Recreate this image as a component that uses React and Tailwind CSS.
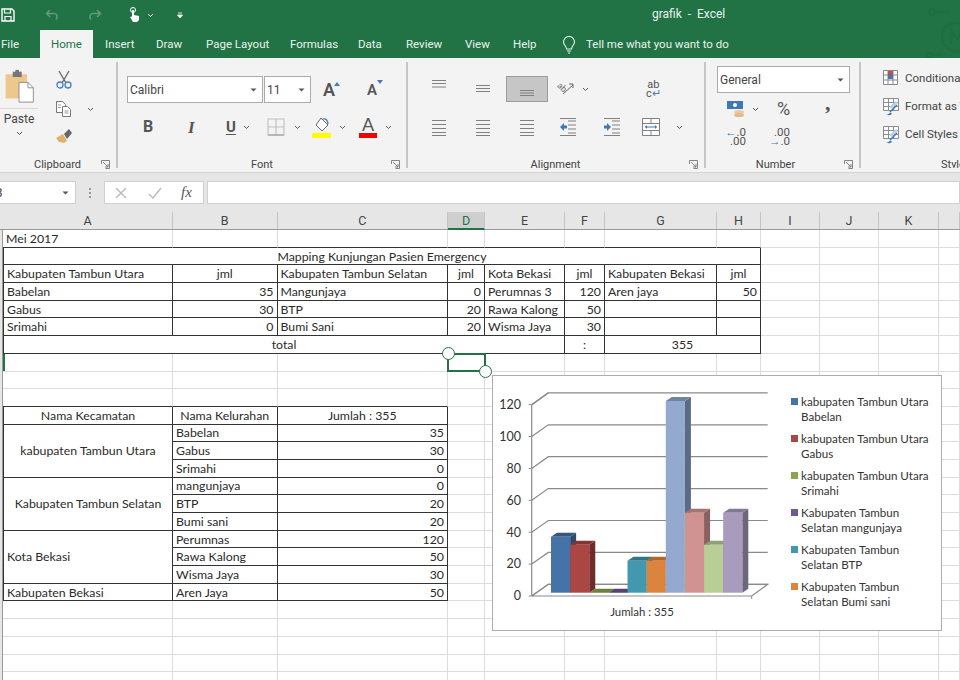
import { Fragment } from "react";

const tabs = [
  { label: "Insert", cls: "ml-[12px] w-[39px]" },
  { label: "Draw", cls: "ml-[12px] w-[38px]" },
  { label: "Page Layout", cls: "ml-[12px] w-[72px]" },
  { label: "Formulas", cls: "ml-[12px] w-[56px]" },
  { label: "Data", cls: "ml-[12px] w-[36px]" },
  { label: "Review", cls: "ml-[12px] w-[47px]" },
  { label: "View", cls: "ml-[12px] w-[36px]" },
  { label: "Help", cls: "ml-[12px] w-[32px]" },
];

const headers = [
  ["A", "w-[170px]"], ["B", "w-[104.5px]"], ["C", "w-[170.5px]"], ["D", "w-[37px]"],
  ["E", "w-[80px]"], ["F", "w-[40px]"], ["G", "w-[112px]"], ["H", "w-[44px]"],
  ["I", "w-[59px]"], ["J", "w-[59px]"], ["K", "w-[60px]"], ["", "w-[21px]"],
];

// t text, s span, a align, r black right, b black bottom, l black left, rs row span
const sheet = [
  [{ t: "Mei 2017", b: 1 }, { b: 1 }, { b: 1 }, { b: 1 }, { b: 1 }, { b: 1 }, { b: 1 }, { b: 1 }],
  [{ t: "Mapping Kunjungan Pasien Emergency", s: 8, a: "c", l: 1, r: 1, b: 1 }],
  [
    { t: "Kabupaten Tambun Utara", l: 1, r: 1, b: 1 }, { t: "jml", a: "c", r: 1, b: 1 },
    { t: "Kabupaten Tambun Selatan", r: 1, b: 1 }, { t: "jml", a: "c", r: 1, b: 1 },
    { t: "Kota Bekasi", r: 1, b: 1 }, { t: "jml", a: "c", r: 1, b: 1 },
    { t: "Kabupaten Bekasi", r: 1, b: 1 }, { t: "jml", a: "c", r: 1, b: 1 },
  ],
  [
    { t: "Babelan", l: 1, r: 1, b: 1 }, { t: "35", a: "r", r: 1, b: 1 },
    { t: "Mangunjaya", r: 1, b: 1 }, { t: "0", a: "r", r: 1, b: 1 },
    { t: "Perumnas 3", r: 1, b: 1 }, { t: "120", a: "r", r: 1, b: 1 },
    { t: "Aren jaya", r: 1, b: 1 }, { t: "50", a: "r", r: 1, b: 1 },
  ],
  [
    { t: "Gabus", l: 1, r: 1, b: 1 }, { t: "30", a: "r", r: 1, b: 1 },
    { t: "BTP", r: 1, b: 1 }, { t: "20", a: "r", r: 1, b: 1 },
    { t: "Rawa Kalong", r: 1, b: 1 }, { t: "50", a: "r", r: 1, b: 1 },
    { r: 1, b: 1 }, { r: 1, b: 1 },
  ],
  [
    { t: "Srimahi", l: 1, r: 1, b: 1 }, { t: "0", a: "r", r: 1, b: 1 },
    { t: "Bumi Sani", r: 1, b: 1 }, { t: "20", a: "r", r: 1, b: 1 },
    { t: "Wisma Jaya", r: 1, b: 1 }, { t: "30", a: "r", r: 1, b: 1 },
    { r: 1, b: 1 }, { r: 1, b: 1 },
  ],
  [
    { t: "total", s: 5, a: "c", l: 1, r: 1, b: 1 }, { t: ":", a: "c", r: 1, b: 1 },
    { t: "355", s: 2, a: "c", r: 1, b: 1 },
  ],
  [],
  [],
  [{ b: 1 }, { b: 1 }, { b: 1 }],
  [
    { t: "Nama Kecamatan", a: "c", l: 1, r: 1, b: 1 }, { t: "Nama Kelurahan", a: "c", r: 1, b: 1 },
    { t: "Jumlah : 355", a: "c", r: 1, b: 1 },
  ],
  [
    { t: "kabupaten Tambun Utara", a: "c", l: 1, r: 1, b: 1, rs: 1 },
    { t: "Babelan", r: 1, b: 1 }, { t: "35", a: "r", r: 1, b: 1 },
  ],
  [{ t: "Gabus", r: 1, b: 1 }, { t: "30", a: "r", r: 1, b: 1 }],
  [{ t: "Srimahi", r: 1, b: 1 }, { t: "0", a: "r", r: 1, b: 1 }],
  [
    { t: "Kabupaten Tambun Selatan", a: "c", l: 1, r: 1, b: 1, rs: 1 },
    { t: "mangunjaya", r: 1, b: 1 }, { t: "0", a: "r", r: 1, b: 1 },
  ],
  [{ t: "BTP", r: 1, b: 1 }, { t: "20", a: "r", r: 1, b: 1 }],
  [{ t: "Bumi sani", r: 1, b: 1 }, { t: "20", a: "r", r: 1, b: 1 }],
  [
    { t: "Kota Bekasi", l: 1, r: 1, b: 1, rs: 1 },
    { t: "Perumnas", r: 1, b: 1 }, { t: "120", a: "r", r: 1, b: 1 },
  ],
  [{ t: "Rawa Kalong", r: 1, b: 1 }, { t: "50", a: "r", r: 1, b: 1 }],
  [{ t: "Wisma Jaya", r: 1, b: 1 }, { t: "30", a: "r", r: 1, b: 1 }],
  [
    { t: "Kabupaten Bekasi", l: 1, r: 1, b: 1 }, { t: "Aren Jaya", r: 1, b: 1 },
    { t: "50", a: "r", r: 1, b: 1 },
  ],
];

const spanClass = { 1: "col-span-1", 2: "col-span-2", 5: "col-span-5", 8: "col-span-8" };
const alignClass = {
  l: "justify-start",
  c: "justify-center",
  r: "justify-end pr-[2px]",
};

const bars = [
  { v: 35, f: "#4572a7", t: "#34567f", s: "#2d4a6e" },
  { v: 30, f: "#aa4643", t: "#843533", s: "#6f2b29" },
  { v: 0, f: "#89a54e", t: "#6a803c", s: "#5a6d33" },
  { v: 0, f: "#71588f", t: "#56436e", s: "#4a3a5e" },
  { v: 20, f: "#4198af", t: "#317587", s: "#2a6373" },
  { v: 20, f: "#db843d", t: "#b0682d", s: "#965926" },
  { v: 120, f: "#93a9cf", t: "#72849f", s: "#5c6b85" },
  { v: 50, f: "#d19392", t: "#a47372", s: "#8a6060" },
  { v: 30, f: "#b9cd96", t: "#909f74", s: "#7a8862" },
  { v: 50, f: "#a99bbd", t: "#847993", s: "#6f667c" },
];

const legend = [
  { c: "bg-[#4572a7]", a: "kabupaten Tambun Utara", b: "Babelan" },
  { c: "bg-[#aa4643]", a: "kabupaten Tambun Utara", b: "Gabus" },
  { c: "bg-[#89a54e]", a: "kabupaten Tambun Utara", b: "Srimahi" },
  { c: "bg-[#71588f]", a: "Kabupaten Tambun", b: "Selatan mangunjaya" },
  { c: "bg-[#4198af]", a: "Kabupaten Tambun", b: "Selatan BTP" },
  { c: "bg-[#db843d]", a: "Kabupaten Tambun", b: "Selatan Bumi sani" },
];

const Chev = ({ className = "", color = "#555" }) => (
  <svg width="7" height="5" viewBox="0 0 7 5" className={className}>
    <path d="M1 1l2.5 2.5L6 1" fill="none" stroke={color} strokeWidth="1" />
  </svg>
);

const Caret = ({ className = "" }) => (
  <svg width="7" height="4" viewBox="0 0 7 4" className={className}>
    <path d="M0.5 0.5h6L3.5 3.5z" fill="#555" />
  </svg>
);

const Launcher = ({ className = "" }) => (
  <svg width="9" height="9" viewBox="0 0 9 9" className={className}>
    <path d="M0.5 4V0.5H8.5V8.5H4.5M2 2l5 5M7 4v3H4" fill="none" stroke="#777" strokeWidth="0.9" />
  </svg>
);

const Lines = ({ rows }) => (
  <svg width="18" height="18" viewBox="0 0 18 18">
    {rows.map((y) => (
      <path key={y} d={`M2 ${y}H16`} stroke="#808080" strokeWidth="1" />
    ))}
  </svg>
);

const TableBrush = () => (
  <svg width="17" height="18" viewBox="0 0 17 18" className="shrink-0">
    <path d="M.5.5h15v12H.5zM.5 4.500h15M5.500 .5v12M10.500 .5v12M.5 8.500h15" fill="#fff" stroke="#8c8c8c" />
    <path d="M6 9l7-6 2 2-6 6z" fill="#b9d2ea" />
    <path d="M3 16.500c2 0 3-.5 4-2l2 1c-1 2-3 2-6 1z" fill="#3f78b5" />
    <path d="M7 14l7-7" stroke="#3f78b5" strokeWidth="1.500" />
  </svg>
);

const GroupLabel = ({ children, launcher, className = "" }) => (
  <div className={`relative h-[10px] -mb-[2px] flex items-center justify-center text-[11px] text-[#444] ${className}`}>
    {children}
    {launcher && <Launcher className="absolute right-[6px] top-0" />}
  </div>
);

const Ribbon = () => (
  <div className="h-[114px] bg-[#f3f3f3] pb-[4px]">
    <div className="h-[110px] flex pt-[4px]">
      {/* clipboard */}
      <div className="w-[118px] border-r-2 border-[#c6c6c6] flex flex-col">
        <div className="flex-1 flex">
          <div className="w-[38px] flex flex-col items-center">
            <svg width="34" height="34" viewBox="0 0 38 38" className="mt-[7px] mb-[5px]">
              <rect x="4" y="6" width="24" height="27" rx="1" fill="#edc88d" />
              <rect x="12" y="3" width="10" height="6" fill="#777" />
              <rect x="15" y="1" width="4" height="3" fill="#777" />
              <path d="M19 15h10l6 6v16H19z" fill="#fff" stroke="#888" strokeWidth="1" />
              <path d="M29 15v6h6" fill="none" stroke="#888" strokeWidth="1" />
            </svg>
            <div className="h-px w-full bg-[#d8d8d8] mb-[3px]" />
            <span className="text-[12px] leading-[14px] text-[#444]">Paste</span>
            <Chev className="mt-[5px]" />
          </div>
          <div className="w-[36px] ml-[8px] flex flex-col items-center pt-[8px] gap-[10px]">
            <svg width="18" height="20" viewBox="0 0 18 20">
              <path d="M4 1l7 12M14 1L7 13" stroke="#666" strokeWidth="1.3" fill="none" />
              <circle cx="5" cy="15" r="3" fill="none" stroke="#4e7eb5" strokeWidth="1.3" />
              <circle cx="13" cy="15" r="3" fill="none" stroke="#4e7eb5" strokeWidth="1.3" />
            </svg>
            <svg width="18" height="18" viewBox="0 0 18 18">
              <path d="M1.5 1.5h6l3 3v8h-9z" fill="#fff" stroke="#777" />
              <path d="M7.5 6.5h5l3 3v7h-8z" fill="#fff" stroke="#777" />
              <path d="M9.5 11h4M9.5 13h4M3 5h3M3 7.5h3" stroke="#999" />
            </svg>
            <svg width="18" height="18" viewBox="0 0 18 18">
              <path d="M1 10l7-4 4 7-3 2-5-1z" fill="#e0b26c" />
              <path d="M9 6l5-5 3 4-5 6z" fill="#666" />
            </svg>
          </div>
          <Chev className="mt-[45px] ml-[5px]" />
        </div>
        <GroupLabel launcher className="-ml-[1px]">Clipboard</GroupLabel>
      </div>

      {/* font */}
      <div className="w-[290px] border-r-2 border-[#c6c6c6] flex flex-col">
        <div className="flex-1">
          <div className="flex items-center mt-[14px] ml-[9px] h-[27px]">
            <div className="w-[136px] h-[27px] bg-white border border-[#ababab] flex items-center justify-between pl-[2px] pr-[5px] text-[12px] text-[#444]">
              Calibri
              <Caret />
            </div>
            <div className="ml-[1px] w-[47px] h-[27px] bg-white border border-[#ababab] flex items-center justify-between pl-[2px] pr-[5px] text-[12px] text-[#444]">
              11
              <Caret />
            </div>
            <span className="ml-[12px] relative text-[18px] leading-none text-[#555] font-semibold">
              A
              <svg width="6" height="4" viewBox="0 0 6 4" className="absolute -right-[5px] top-[1px]"><path d="M3 0l3 4H0z" fill="#4a7ab0" /></svg>
            </span>
            <span className="ml-[32px] relative text-[15px] leading-none text-[#555] font-semibold mt-[2px]">
              A
              <svg width="6" height="4" viewBox="0 0 6 4" className="absolute -right-[6px] top-[-3px]"><path d="M0 0h6L3 4z" fill="#4a7ab0" /></svg>
            </span>
          </div>
          <div className="flex items-center mt-[12px] h-[24px] text-[#555]">
            <span className="ml-[25px] w-[12px] text-[16px] font-bold leading-none">B</span>
            <span className="ml-[33px] w-[12px] text-[17px] font-bold italic leading-none font-['Liberation_Serif',serif]">I</span>
            <span className="ml-[26px] text-[15px] font-bold leading-none underline underline-offset-2">U</span>
            <Chev className="ml-[7px]" />
            <svg width="18" height="18" viewBox="0 0 18 18" className="ml-[17px]">
              <path d="M1 1h16v16H1zM9 1v16M1 9h16" fill="none" stroke="#c2c2c2" strokeWidth="1.2" />
              <path d="M1 17h16" stroke="#aaa" strokeWidth="1.5" />
            </svg>
            <Chev className="ml-[9px]" />
            <svg width="20" height="22" viewBox="0 0 20 22" className="ml-[11px]">
              <path d="M9 2l7 7-6 6-6-6z" fill="#fff" stroke="#666" />
              <path d="M11 3c3-1 5 2 5 5" fill="none" stroke="#4a7ab0" strokeWidth="1.3" />
              <rect x="0" y="17" width="19" height="5" fill="#ffff00" />
            </svg>
            <Chev className="ml-[7px]" />
            <svg width="20" height="22" viewBox="0 0 20 22" className="ml-[12px]">
              <text x="10" y="15" textAnchor="middle" fontSize="18" fill="#555" fontFamily="Lato, sans-serif">A</text>
              <rect x="1" y="17" width="18" height="5" fill="#f00000" />
            </svg>
            <Chev className="ml-[7px]" />
          </div>
        </div>
        <GroupLabel launcher>Font</GroupLabel>
      </div>

      {/* alignment */}
      <div className="w-[298px] border-r-2 border-[#c6c6c6] flex flex-col">
        <div className="flex-1">
          <div className="flex items-center mt-[14px] h-[26px]">
            <div className="ml-[22px]"><Lines rows={[0.5, 3.5, 7]} /></div>
            <div className="ml-[26px]"><Lines rows={[5.5, 8.5, 11.5]} /></div>
            <div className="ml-[14px] w-[42px] h-[26px] bg-[#c6c6c6] border border-[#9c9c9c] flex items-center justify-center">
              <Lines rows={[10.5, 13, 15.5]} />
            </div>
            <svg width="20" height="18" viewBox="0 0 20 18" className="ml-[7px]">
              <text x="1" y="13" fontSize="9" fill="#666" transform="rotate(45 6 9) translate(0 -3)" fontFamily="Lato, sans-serif">ab</text>
              <path d="M8 14l10-9M14 4h4v4" fill="none" stroke="#666" />
            </svg>
            <Chev className="ml-[7px]" />
            <div className="ml-[57px] flex flex-col items-center text-[11px] leading-[9px] text-[#555]">
              <span>ab</span>
              <span>c<span className="text-[#4a7ab0]">↵</span></span>
            </div>
          </div>
          <div className="flex items-center mt-[13px] h-[24px]">
            <div className="ml-[22px]"><Lines rows={[2.5, 6.5, 10.5, 14.5, 17.5]} /></div>
            <div className="ml-[26px]"><Lines rows={[2.5, 6.5, 10.5, 14.5, 17.5]} /></div>
            <div className="ml-[26px]"><Lines rows={[2.5, 6.5, 10.5, 14.5, 17.5]} /></div>
            <svg width="18" height="18" viewBox="0 0 18 18" className="ml-[23px]">
              <path d="M9 3h8M9 7h8M9 11h8M9 15h8M1 17.5h16M1 .5h16" stroke="#808080" />
              <path d="M1 9l4-4v2.5h3v3H5V13z" fill="#3f78b5" />
            </svg>
            <svg width="18" height="18" viewBox="0 0 18 18" className="ml-[26px]">
              <path d="M9 3h8M9 7h8M9 11h8M9 15h8M1 17.5h16M1 .5h16" stroke="#808080" />
              <path d="M8 9L4 5v2.5H1v3h3V13z" fill="#3f78b5" />
            </svg>
            <svg width="18" height="18" viewBox="0 0 18 18" className="ml-[21px]">
              <path d="M.5.5h17v17H.5zM.5 5.5h17M.5 12.5h17M9 .5v5M9 12.5v5" fill="#fff" stroke="#808080" />
              <path d="M3.5 9h11" stroke="#3f78b5" />
              <path d="M3 9l2-2v4zM15 9l-2-2v4z" fill="#3f78b5" />
            </svg>
            <Chev className="ml-[16px]" />
          </div>
        </div>
        <GroupLabel launcher className="pr-[1px]">Alignment</GroupLabel>
      </div>

      {/* number */}
      <div className="w-[155px] border-r-2 border-[#c6c6c6] flex flex-col">
        <div className="flex-1">
          <div className="ml-[11px] mt-[4px] w-[133px] h-[27px] bg-white border border-[#ababab] flex items-center justify-between pl-[2px] pr-[5px] text-[12px] text-[#444]">
            General
            <Caret />
          </div>
          <div className="flex items-center mt-[5px] h-[22px]">
            <svg width="20" height="18" viewBox="0 0 20 18" className="ml-[20px]">
              <rect x="1" y="1" width="16" height="8" fill="#3f78b5" />
              <circle cx="9" cy="5" r="2" fill="#fff" />
              <ellipse cx="13" cy="12" rx="5" ry="2" fill="#eccb9e" />
              <ellipse cx="13" cy="15" rx="5" ry="2" fill="#e5bc85" />
            </svg>
            <Chev className="ml-[6px]" />
            <span className="ml-[18px] w-[18px] text-[18px] leading-none text-[#555]">%</span>
            <span className="ml-[30px] -mt-[12px] text-[22px] font-bold leading-none text-[#555] font-['Liberation_Serif',serif]">,</span>
          </div>
          <div className="flex items-center mt-[6px] h-[22px] text-[11.5px] leading-[9px] text-[#555]">
            <div className="ml-[18px] w-[22px] flex flex-col items-end">
              <span><span className="text-[#3f78b5]">←</span>.0</span>
              <span>.00</span>
            </div>
            <div className="ml-[22px] w-[22px] flex flex-col items-end">
              <span>.00</span>
              <span><span className="text-[#3f78b5]">→</span>.0</span>
            </div>
          </div>
        </div>
        <GroupLabel launcher className="pr-[14px]">Number</GroupLabel>
      </div>

      {/* styles, cut off by the window */}
      <div className="flex-1 flex flex-col overflow-hidden">
        <div className="flex-1 flex flex-col pl-[22px] pt-[7px] gap-[9px] text-[11.5px] text-[#444] whitespace-nowrap">
          <div className="flex items-center h-[19px] gap-[5px]">
            <svg width="17" height="17" viewBox="0 0 17 17" className="shrink-0">
              <path d="M.5.5h14v14H.5zM5 .5v14M10 .5v14M.5 5h14M.5 10h14" fill="#fff" stroke="#888" />
              <rect x="5" y="1" width="5" height="4" fill="#c0504d" />
              <rect x="5" y="5" width="5" height="4" fill="#3f78b5" />
            </svg>
            Conditional Formatting
          </div>
          <div className="flex items-center h-[19px] gap-[5px]">
            <TableBrush />
            Format as Table
          </div>
          <div className="flex items-center h-[19px] gap-[5px]">
            <TableBrush />
            Cell Styles
          </div>
        </div>
        <div className="h-[10px] -mb-[2px] pl-[80px] text-[11px] text-[#444] leading-[10px] whitespace-nowrap">Styles</div>
      </div>
    </div>
  </div>
);

const Chart = () => {
  const base = 592.7;
  const unit = 1.5975;
  return (
    <div className="absolute left-[489px] top-[145px] w-[450px] h-[256px] bg-white border border-[#adadad] flex">
      <svg width="293" height="254" viewBox="493 376 293 254" className="shrink-0">
        <path d="M531.7 596V405L548.3 392.7M531.7 596L548.3 584.3H767.7L751.7 596H531.7" fill="none" stroke="#8a8a8a" strokeWidth="1.2" />
        {[0, 1, 2, 3, 4, 5, 6].map((i) => {
          const y = 584.3 - i * 31.9;
          return (
            <g key={i}>
              <path d={`M${531.7} ${y + 11.7}L548.3 ${y}H767.7`} fill="none" stroke="#8a8a8a" strokeWidth="1.2" />
              <path d={`M528.7 ${y + 11.7}H531.7`} stroke="#8a8a8a" />
              <text x="521" y={y + 16} textAnchor="end" fontSize="12.5" fill="#333" fontFamily="Lato, sans-serif">{i * 20}</text>
            </g>
          );
        })}
        <path d="M751.7 596V599" stroke="#8a8a8a" />
        {bars.map((bar, i) => {
          const x = 551 + i * 19.13;
          const top = base - bar.v * unit;
          return (
            <g key={i}>
              <path d={`M${x + 19.13} ${top}l6 -4V${base - 4}l-6 4z`} fill={bar.s} />
              <path d={`M${x} ${top}l6 -4h19.13l-6 4z`} fill={bar.t} />
              <rect x={x} y={top} width="19.13" height={base - top} fill={bar.f} />
            </g>
          );
        })}
        <text x="642" y="616" textAnchor="middle" fontSize="11.4" fill="#333" fontFamily="Lato, sans-serif">Jumlah : 355</text>
      </svg>
      <div className="flex flex-col gap-[7px] pl-[5px] pt-[18px] text-[11.6px] leading-[15px] text-[#333] font-['Lato',sans-serif]">
        {legend.map((item, i) => (
          <div key={i} className="flex items-start whitespace-nowrap">
            <span className={`w-[7px] h-[7px] mt-[4px] mr-[3px] shrink-0 ${item.c}`} />
            <div>
              <div>{item.a}</div>
              <div>{item.b}</div>
            </div>
          </div>
        ))}
      </div>
    </div>
  );
};

const Cell = ({ c, blank }) => {
  const s = c.s || 1;
  return (
    <div
      className={`flex items-center pt-px pl-[3px] pr-[3px] whitespace-nowrap overflow-hidden border-r border-b ${spanClass[s]} ${c.rs ? "row-span-3" : ""} ${alignClass[c.a || "l"]} ${c.r ? "border-r-[#333]" : "border-r-[#dcdcdc]"} ${c.b ? "border-b-[#333]" : "border-b-[#dcdcdc]"} ${c.l ? "border-l border-l-[#333] pl-[2px]" : ""}`}
    >
      {blank ? null : c.t}
    </div>
  );
};

export default function App() {
  const used = sheet.map((row, i) => {
    let n = row.reduce((sum, c) => sum + (c.s || 1), 0);
    // rows under a merged cell have column A taken
    if ([12, 13, 15, 16, 18, 19].includes(i)) n += 1;
    return n;
  });

  return (
    <div className="w-[960px] h-[680px] overflow-hidden bg-white font-['Roboto',sans-serif]">
      {/* title bar */}
      <div className="relative h-[30px] bg-[#217346] flex items-center text-[#e8f2ec]">
        <svg width="14" height="14" viewBox="0 0 14 14" className="ml-[1px]">
          <path d="M1 1h10l2 2v10H1z" fill="none" stroke="#fff" strokeWidth="1.4" />
          <path d="M3.5 1v4h6V1M4 13V8.500h6V13" fill="none" stroke="#fff" strokeWidth="1.2" />
        </svg>
        <svg width="14" height="12" viewBox="0 0 14 12" className="ml-[30px]">
          <path d="M5 1L1.500 4.500 5 8M2 4.500h7c3 0 4 3 2 6" fill="none" stroke="#5f9c7d" strokeWidth="1.5" />
        </svg>
        <svg width="14" height="12" viewBox="0 0 14 12" className="ml-[29px]">
          <path d="M9 1l3.500 3.500L9 8M12 4.500H5c-3 0-4 3-2 6" fill="none" stroke="#5f9c7d" strokeWidth="1.5" />
        </svg>
        <svg width="12" height="16" viewBox="0 0 12 16" className="ml-[27px]">
          <circle cx="4" cy="3" r="2.500" fill="none" stroke="#fff" />
          <path d="M3 3h2v5l5 1v4l-2 2H4L1 10l2-.5z" fill="#fff" />
        </svg>
        <Chev className="ml-[6px]" color="#fff" />
        <svg width="6" height="7" viewBox="0 0 6 7" className="ml-[23px]">
          <path d="M1 1h4M0.500 3h5L3 6z" stroke="#fff" strokeWidth="0.8" fill="#fff" />
        </svg>
        <span className="absolute left-[652px] top-[6px] text-[12px] leading-[16px] whitespace-pre">grafik  -  Excel</span>
      </div>

      {/* tabs */}
      <div className="relative h-[28px] bg-[#217346] flex items-start text-[11.5px] leading-[28px] text-[#e8f2ec] whitespace-nowrap">
        <span className="w-[40px] pl-[1px]">File</span>
        <span className="w-[53px] h-[28px] bg-[#f3f3f3] text-[#217346] text-center">Home</span>
        {tabs.map((tab) => (
          <span key={tab.label} className={tab.cls}>{tab.label}</span>
        ))}
        <svg width="14" height="18" viewBox="0 0 14 18" className="ml-[17px] mt-[6px]">
          <path d="M4.500 13c0-3-3-4-3-7a5.500 5.500 0 0 1 11 0c0 3-3 4-3 7zM5 15h4M6 17h2" fill="none" stroke="#e8f2ec" strokeWidth="1.1" />
        </svg>
        <span className="ml-[10px]">Tell me what you want to do</span>
        <svg width="34" height="58" viewBox="0 0 34 58" className="absolute right-0 -top-[30px]">
          <g fill="none" stroke="#1f6e43" strokeWidth="2.500">
            <circle cx="6" cy="12" r="3" />
            <path d="M9 12h14" />
            <circle cx="30" cy="37" r="14" />
            <path d="M25 44V31l6 8 5-8" />
            <circle cx="3" cy="55" r="2.500" />
            <path d="M5 55h12" />
          </g>
        </svg>
      </div>

      <Ribbon />

      {/* formula bar */}
      <div className="h-[40px] bg-[#e6e6e6] border-t border-[#d6d6d6] pt-[8px]">
        <div className="flex h-[23px] items-stretch">
          <div className="w-[82px] -ml-[6px] bg-white border border-[#d0d0d0] flex items-center justify-between pr-[6px] text-[12px] text-[#444]">
            B
            <Caret />
          </div>
          <div className="ml-[13px] w-[3px] flex flex-col justify-center gap-[2px]">
            <span className="w-[2px] h-[2px] bg-[#999]" />
            <span className="w-[2px] h-[2px] bg-[#999]" />
            <span className="w-[2px] h-[2px] bg-[#999]" />
          </div>
          <div className="ml-[12px] w-[100px] bg-white border border-[#d0d0d0] flex items-center">
            <svg width="12" height="12" viewBox="0 0 12 12" className="ml-[10px]">
              <path d="M1 1l10 10M11 1L1 11" stroke="#bdbdbd" strokeWidth="1.500" />
            </svg>
            <svg width="14" height="12" viewBox="0 0 14 12" className="ml-[21px]">
              <path d="M1 7l4 4 8-10" fill="none" stroke="#bdbdbd" strokeWidth="1.500" />
            </svg>
            <span className="ml-[19px] text-[15px] italic text-[#555] font-['Liberation_Serif',serif]">fx</span>
          </div>
          <div className="ml-[3px] flex-1 bg-white border border-[#d0d0d0]" />
        </div>
      </div>

      {/* column headers */}
      <div className="h-[18px] bg-[#e6e6e6] border-b border-[#9a9a9a] flex pl-[3px] text-[12.5px] leading-[17px] text-[#444]">
        {headers.map(([name, width]) => (
          <div
            key={name || "L"}
            className={`${width} shrink-0 text-center border-r border-[#c4c4c4] ${name === "D" ? "bg-[#cfcfcf] text-[#217346] border-b-2 border-b-[#217346] h-[18px]" : ""}`}
          >
            {name}
          </div>
        ))}
      </div>

      {/* sheet */}
      <div className="flex">
        <div className="w-[3px] bg-[#e6e6e6] border-r border-[#9a9a9a] shrink-0" />
        <div className="relative flex-1">
          <div className="grid grid-cols-[170px_104.5px_170.5px_37px_80px_40px_112px_44px_59px_59px_60px_21px] auto-rows-[17.7px] text-[12.3px] leading-[16px] text-[#2a2a2a] font-['Lato',sans-serif]">
            {sheet.map((row, i) => (
              <Fragment key={i}>
                {row.map((c, j) => (
                  <Cell key={j} c={c} />
                ))}
                {Array.from({ length: 12 - used[i] }).map((_, j) => (
                  <Cell key={`e${j}`} c={{}} blank />
                ))}
              </Fragment>
            ))}
            {Array.from({ length: 60 }).map((_, i) => (
              <Cell key={`r${i}`} c={{}} blank />
            ))}
          </div>

          {/* selected cell, row mark and handles */}
          <div className="absolute left-0 top-[124px] w-[2px] h-[17px] bg-[#217346]" />
          <div className="absolute left-[444px] top-[123px] w-[39px] h-[19px] border-2 border-[#217346]" />
          <div className="absolute left-[439px] top-[117px] w-[13px] h-[13px] rounded-full bg-white border border-[#217346]" />
          <div className="absolute left-[476px] top-[135px] w-[13px] h-[13px] rounded-full bg-white border border-[#217346]" />

          <Chart />
        </div>
      </div>
    </div>
  );
}
